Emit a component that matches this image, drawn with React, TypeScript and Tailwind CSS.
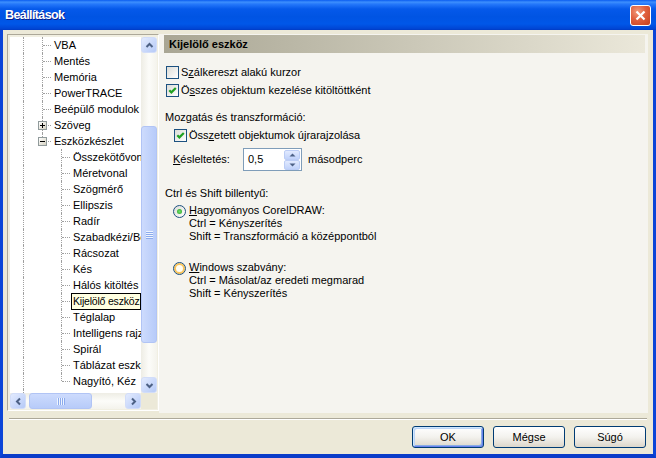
import React from 'react';

type TreeItem = { label: string; level: 1 | 2; last?: boolean; box?: 'plus' | 'minus'; bare?: boolean };

const items: TreeItem[] = [
  { label: 'VBA', level: 1 },
  { label: 'Mentés', level: 1 },
  { label: 'Memória', level: 1 },
  { label: 'PowerTRACE', level: 1 },
  { label: 'Beépülő modulok', level: 1 },
  { label: 'Szöveg', level: 1, box: 'plus' },
  { label: 'Eszközkészlet', level: 1, box: 'minus', last: true },
  { label: 'Összekötővonal', level: 2 },
  { label: 'Méretvonal', level: 2 },
  { label: 'Szögmérő', level: 2 },
  { label: 'Ellipszis', level: 2 },
  { label: 'Radír', level: 2 },
  { label: 'Szabadkézi/Bézier', level: 2 },
  { label: 'Rácsozat', level: 2 },
  { label: 'Kés', level: 2 },
  { label: 'Hálós kitöltés', level: 2 },
  { label: 'Kijelölő eszköz', level: 2 },
  { label: 'Téglalap', level: 2 },
  { label: 'Intelligens rajzolás', level: 2 },
  { label: 'Spirál', level: 2 },
  { label: 'Táblázat eszköz', level: 2 },
  { label: 'Nagyító, Kéz', level: 2, last: true },
  { label: 'Interaktív eszközök', level: 2, bare: true },
];

type Dir = 'up' | 'down' | 'left' | 'right';

const arrowPath: Record<Dir, string> = {
  up: 'M1.5 6 L4.5 3 L7.5 6',
  down: 'M1.5 3 L4.5 6 L7.5 3',
  left: 'M6 1.5 L3 4.5 L6 7.5',
  right: 'M3 1.5 L6 4.5 L3 7.5',
};

const Arrow = ({ dir }: { dir: Dir }) => (
  <svg width="9" height="9" viewBox="0 0 9 9">
    <path d={arrowPath[dir]} stroke="#4d6185" strokeWidth="2" fill="none" />
  </svg>
);

const ScrollBtn = ({ dir }: { dir: Dir }) => (
  <div className="flex h-4 w-4 shrink-0 items-center justify-center rounded-[3px] border border-[#d2ddf9] bg-linear-to-br from-[#e3ebfe] to-[#b6caf7]">
    <Arrow dir={dir} />
  </div>
);

const Col = ({ kind, box }: { kind: 'line' | 'tee' | 'end' | 'none'; box?: 'plus' | 'minus' }) => (
  <div className="relative h-4 w-[19px] shrink-0">
    {kind === 'line' && <div className="absolute left-[9px] top-0 h-4 border-l border-dotted border-[#a0a0a0]" />}
    {kind === 'tee' && <div className="absolute left-[9px] top-0 h-4 border-l border-dotted border-[#a0a0a0]" />}
    {kind === 'end' && <div className="absolute left-[9px] top-0 h-2 border-l border-dotted border-[#a0a0a0]" />}
    {(kind === 'tee' || kind === 'end') && (
      <div className="absolute left-[10px] top-2 w-[8px] border-t border-dotted border-[#a0a0a0]" />
    )}
    {box && (
      <div className="absolute left-[5px] top-[4px] flex h-[9px] w-[9px] items-center justify-center border border-[#919b9c] bg-linear-to-br from-white to-[#d6d2c2]">
        <svg width="7" height="7" viewBox="0 0 7 7" shapeRendering="crispEdges">
          <path d="M1 3.5 H6" stroke="#000" strokeWidth="1" />
          {box === 'plus' && <path d="M3.5 1 V6" stroke="#000" strokeWidth="1" />}
        </svg>
      </div>
    )}
  </div>
);

const TreeRow = ({ item }: { item: TreeItem }) => (
  <div className="flex h-4 items-center whitespace-nowrap">
    <Col kind="line" />
    {item.level === 1 ? (
      <Col kind={item.last ? 'end' : 'tee'} box={item.box} />
    ) : (
      <>
        <Col kind="none" />
        <Col kind={item.bare ? 'none' : item.last ? 'end' : 'tee'} />
      </>
    )}
    <span className="pl-[2px] leading-[13px]">{item.label}</span>
  </div>
);

const Grip = ({ vertical }: { vertical?: boolean }) =>
  vertical ? (
    <div className="flex flex-col">
      {[0, 1, 2, 3].map((i) => (
        <div key={i} className="flex flex-col">
          <div className="h-px w-[7px] bg-[#eef4fe]" />
          <div className="h-px w-[7px] bg-[#8cabed]" />
        </div>
      ))}
    </div>
  ) : (
    <div className="flex">
      {[0, 1, 2, 3].map((i) => (
        <div key={i} className="flex">
          <div className="h-[7px] w-px bg-[#eef4fe]" />
          <div className="h-[7px] w-px bg-[#8cabed]" />
        </div>
      ))}
    </div>
  );

const Tree = () => (
  <div className="relative h-[377px] w-[152px] shrink-0 border border-t-[#aca899] border-l-[#aca899] border-r-white border-b-white bg-[#f1efe2] pb-[1px] pl-[2px] pr-[1px] pt-[2px]">
    <div className="flex h-[372px] w-[147px] flex-col">
      <div className="flex h-[356px]">
        <div className="h-full w-[131px] overflow-hidden bg-white pl-[4px]">
          {items.map((it) => (
            <TreeRow key={it.label} item={it} />
          ))}
        </div>
        <div className="flex h-full w-4 flex-col bg-linear-to-r from-[#eeede5] via-[#fcfcf9] to-[#f4f3ec]">
          <ScrollBtn dir="up" />
          <div className="h-[73px]" />
          <div className="flex h-[217px] w-4 items-center justify-center rounded-[3px] border border-[#b1c4f5] bg-linear-to-r from-[#cddbfd] to-[#b7cbf9]">
            <Grip vertical />
          </div>
          <div className="flex-1" />
          <ScrollBtn dir="down" />
        </div>
      </div>
      <div className="flex h-4">
        <div className="flex h-4 w-[131px] bg-linear-to-b from-[#eeede5] via-[#fcfcf9] to-[#f4f3ec]">
          <ScrollBtn dir="left" />
          <div className="w-[3px]" />
          <div className="flex h-4 w-[63px] items-center justify-center rounded-[3px] border border-[#b1c4f5] bg-linear-to-b from-[#cddbfd] to-[#b7cbf9]">
            <Grip />
          </div>
          <div className="flex-1" />
          <ScrollBtn dir="right" />
        </div>
        <div className="w-4 bg-[#ece9d8]" />
      </div>
    </div>
    <div className="absolute left-[63px] top-[258px] flex h-[17px] items-center whitespace-nowrap border border-black bg-[#ffffe1] pl-[1px] pr-[1px] text-[10.5px] leading-[13px] tracking-[-0.2px]">
      Kijelölő eszköz
    </div>
  </div>
);

const Check = ({ checked }: { checked?: boolean }) => (
  <div className="flex h-[13px] w-[13px] shrink-0 items-center justify-center border border-[#1c5180] bg-linear-to-br from-[#dcdcd7] to-white">
    {checked && (
      <svg width="11" height="11" viewBox="0 0 11 11">
        <path d="M2.3 5.2 L4.4 7.4 L8.8 3" stroke="#21a121" strokeWidth="2.2" fill="none" />
      </svg>
    )}
  </div>
);

const Radio = ({ checked, hover }: { checked?: boolean; hover?: boolean }) => (
  <div
    className={
      hover
        ? 'mt-[1px] flex h-[13px] w-[13px] shrink-0 items-center justify-center rounded-full border border-[#1c5180] bg-[#fffdf4] shadow-[inset_0_0_0_2px_#f9c55e]'
        : 'mt-[1px] flex h-[13px] w-[13px] shrink-0 items-center justify-center rounded-full border border-[#1c5180] bg-linear-to-br from-[#dcdcd7] to-white'
    }
  >
    {checked && <div className="h-[5px] w-[5px] rounded-full bg-radial from-[#6ee06a] to-[#21a121]" />}
  </div>
);

const Hk = ({ children }: { children: React.ReactNode }) => <span className="underline">{children}</span>;

const XpButton = ({ label, primary }: { label: string; primary?: boolean }) => (
  <div
    className={
      primary
        ? 'flex h-[22px] w-[72px] items-center justify-center rounded-[3px] border border-[#003c74] bg-linear-to-b from-white via-[#f3f2ee] to-[#dcd7cb] shadow-[inset_1px_1px_0_#cee7ff,inset_-1px_-1px_0_#6982ee,inset_2px_2px_0_#bcd4f6,inset_-2px_-2px_0_#89ade4]'
        : 'flex h-[22px] w-[72px] items-center justify-center rounded-[3px] border border-[#003c74] bg-linear-to-b from-white via-[#f3f2ee] to-[#dcd7cb]'
    }
  >
    {label}
  </div>
);

const SpinBtn = ({ dir }: { dir: 'up' | 'down' }) => (
  <div className="flex h-[10px] w-[16px] items-center justify-center rounded-[2px] border border-[#bccdf5] bg-linear-to-b from-[#e2eafe] to-[#c0d2fa]">
    <svg width="7" height="4" viewBox="0 0 7 4">
      <path d={dir === 'up' ? 'M0.5 3.5 L3.5 0.5 L6.5 3.5 Z' : 'M0.5 0.5 L3.5 3.5 L6.5 0.5 Z'} fill="#4d6185" />
    </svg>
  </div>
);

const Panel = () => (
  <div className="flex h-[379px] w-[489px] flex-col bg-[#f5f4ef]">
    <div className="ml-[5px] mr-[3px] mt-[1px] flex h-[18px] items-center bg-linear-to-r from-[#a9a694] to-[#ebe8da] pl-[5px] font-bold">
      Kijelölő eszköz
    </div>
    <div className="mt-[11px] flex h-[17px] items-center gap-[2px] pl-[7px]">
      <Check />
      <span>
        S<Hk>z</Hk>álkereszt alakú kurzor
      </span>
    </div>
    <div className="mt-[1px] flex h-[17px] items-center gap-[2px] pl-[7px]">
      <Check checked />
      <span>
        Ö<Hk>s</Hk>szes objektum kezelése kitöltöttként
      </span>
    </div>
    <div className="mt-[10px] flex h-[17px] items-center pl-[6px]">Mozgatás és transzformáció:</div>
    <div className="mt-[1px] flex h-[17px] items-center gap-[2px] pl-[15px]">
      <Check checked />
      <span>
        Öss<Hk>z</Hk>etett objektumok újrarajzolása
      </span>
    </div>
    <div className="mt-[4px] flex h-[23px] items-center pl-[14px]">
      <span className="w-[70px]">
        <Hk>K</Hk>ésleltetés:
      </span>
      <div className="flex h-[23px] w-[59px] items-center border border-[#7f9db9] bg-white">
        <span className="flex-1 pl-[4px]">0,5</span>
        <div className="mr-[1px] flex flex-col">
          <SpinBtn dir="up" />
          <SpinBtn dir="down" />
        </div>
      </div>
      <span className="pl-[6px]">másodperc</span>
    </div>
    <div className="mt-[14px] flex h-[17px] items-center pl-[6px]">Ctrl és Shift billentyű:</div>
    <div className="mt-[2px] flex items-start gap-[3px] pl-[14px] leading-[13px]">
      <Radio checked />
      <div className="flex flex-col">
        <span>
          <Hk>H</Hk>agyományos CorelDRAW:
        </span>
        <span>Ctrl = Kényszerítés</span>
        <span>Shift = Transzformáció a középpontból</span>
      </div>
    </div>
    <div className="mt-[18px] flex items-start gap-[3px] pl-[14px] leading-[13px]">
      <Radio hover />
      <div className="flex flex-col">
        <span>
          <Hk>W</Hk>indows szabvány:
        </span>
        <span>Ctrl = Másolat/az eredeti megmarad</span>
        <span>Shift = Kényszerítés</span>
      </div>
    </div>
  </div>
);

const TitleBar = () => (
  <div className="flex h-[30px] shrink-0 items-center justify-between bg-[linear-gradient(180deg,#0a5cf0_0%,#3d8ffd_7%,#2477fa_14%,#0559ea_30%,#0054e3_55%,#0057e8_80%,#0046d5_95%,#003bc4_100%)] pl-[5px] pr-[5px]">
    <span className="font-['Liberation_Sans',Arial,sans-serif] text-[12.5px] font-bold tracking-[-0.6px] text-white [text-shadow:1px_1px_0_#0a1e8a]">
      Beállítások
    </span>
    <div className="flex h-[21px] w-[21px] items-center justify-center rounded-[3px] border border-white bg-[radial-gradient(circle_at_35%_30%,#f29a7c_0%,#e0603e_45%,#c63f1c_100%)]">
      <svg width="11" height="11" viewBox="0 0 11 11">
        <path d="M1.5 1.5 L9.5 9.5 M9.5 1.5 L1.5 9.5" stroke="#fff" strokeWidth="2.2" />
      </svg>
    </div>
  </div>
);

export default function App() {
  return (
    <div className="flex h-[458px] w-[656px] flex-col font-['Liberation_Sans',Arial,sans-serif] text-[11px] text-black">
      <TitleBar />
      <div className="flex flex-1 flex-col border-x-[3px] border-b-4 border-[#0b45d8] border-b-[#0a3cc9] bg-[#ece9d8] pb-[6px] pl-[4px] pr-[5px] pt-[4px]">
        <div className="flex h-[379px] items-start">
          <Tree />
          <Panel />
        </div>
        <div className="ml-[2px] mr-[1px] mt-[5px] h-[2px] border-b border-t border-b-white border-t-[#aca899]" />
        <div className="mt-[6px] flex justify-end gap-[9px] pr-[2px]">
          <XpButton label="OK" primary />
          <XpButton label="Mégse" />
          <XpButton label="Súgó" />
        </div>
      </div>
    </div>
  );
}
